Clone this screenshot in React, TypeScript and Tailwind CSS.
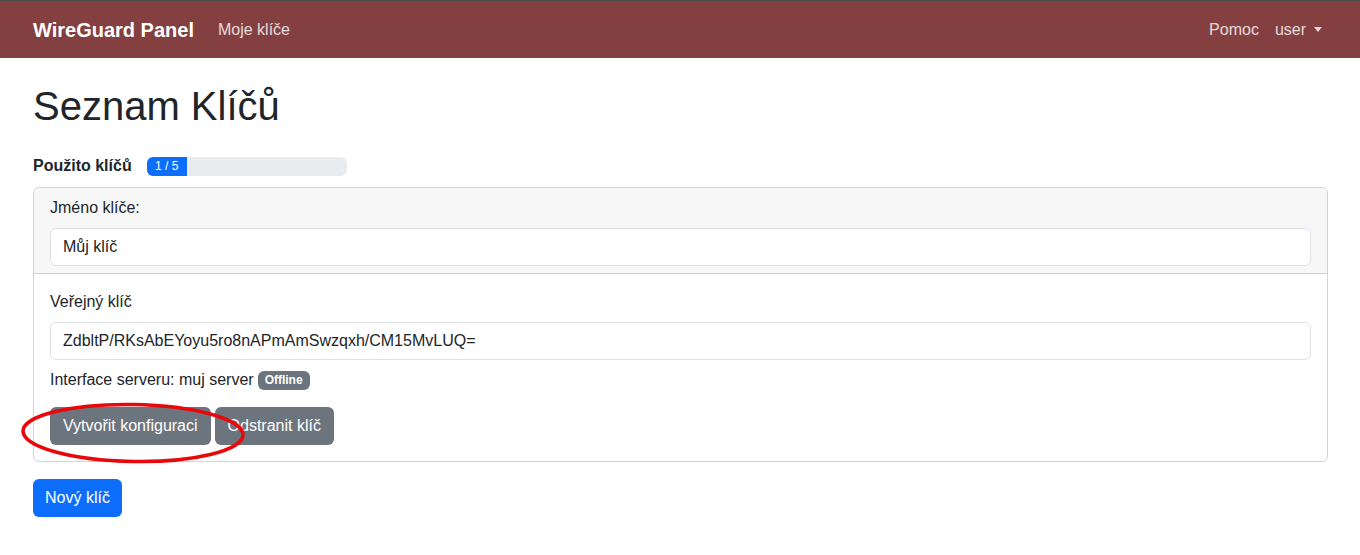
import React from 'react';

const font = { fontFamily: '"Liberation Sans", Arial, sans-serif' };

function Navbar() {
  return (
    <nav className="flex h-[58px] items-center justify-between border-t border-[#4a4a4a] bg-[#843f41] pl-[33px] pr-[38px]">
      <div className="flex items-center">
        <span className="text-[20px] font-bold text-white">WireGuard Panel</span>
        <span className="ml-[24px] text-[16px] text-white/80">Moje klíče</span>
      </div>
      <div className="flex items-center text-[16px] text-white/80">
        <span>Pomoc</span>
        <span className="ml-[16px] flex items-center">
          user
          <span className="ml-[8px] inline-block h-0 w-0 border-x-[4px] border-t-[5px] border-x-transparent border-t-white/80" />
        </span>
      </div>
    </nav>
  );
}

export default function App() {
  return (
    <div className="min-h-[555px] bg-white text-[16px] text-[#212529]" style={font}>
      <Navbar />
      <main className="pl-[33px] pr-[32px] pt-[24px]">
        <h1 className="mb-[24px] text-[40px] leading-[48px]">Seznam Klíčů</h1>

        <div className="mb-[9px] flex items-center">
          <span className="font-bold">Použito klíčů</span>
          <div className="ml-[15px] flex h-[19px] w-[200px] overflow-hidden rounded-[6px] bg-[#e9ecef]">
            <div className="flex w-[40px] items-center justify-center bg-[#0d6efd] text-[12px] text-white">
              1 / 5
            </div>
          </div>
        </div>

        <div className="rounded-[6px] border border-[#d4d4d4]">
          <div className="rounded-t-[6px] border-b border-[#cfcfcf] bg-[#f7f7f7] px-[16px] pt-[8px] pb-[7px]">
            <label className="mb-[8px] block leading-[24px]">Jméno klíče:</label>
            <div className="flex h-[38px] items-center rounded-[6px] border border-[#dee2e6] bg-white px-[12px]">
              Můj klíč
            </div>
          </div>
          <div className="p-[16px]">
            <label className="mb-[8px] block leading-[24px]">Veřejný klíč</label>
            <div className="flex h-[38px] items-center rounded-[6px] border border-[#dee2e6] bg-white px-[12px]">
              ZdbltP/RKsAbEYoyu5ro8nAPmAmSwzqxh/CM15MvLUQ=
            </div>
            <div className="mt-[8px] flex items-center leading-[24px]">
              Interface serveru: muj server
              <span className="ml-[4px] rounded-[6px] bg-[#6c757d] px-[7px] py-[3px] text-[12px] leading-[13px] font-bold text-white">
                Offline
              </span>
            </div>
            <div className="relative mt-[15px] flex gap-[4px]">
              <button className="h-[38px] rounded-[6px] bg-[#6c757d] px-[13px] text-white">Vytvořit konfiguraci</button>
              <button className="h-[38px] rounded-[6px] bg-[#6c757d] px-[13px] text-white">Odstranit klíč</button>
              <svg className="pointer-events-none absolute left-[-32px] top-[-7px]" width="230" height="66" viewBox="0 0 230 66">
                <ellipse cx="115" cy="33" rx="110" ry="28.5" fill="none" stroke="#e8070b" strokeWidth="3.5" transform="rotate(1 115 33)" />
              </svg>
            </div>
          </div>
        </div>

        <button className="mt-[17px] h-[38px] rounded-[6px] bg-[#0d6efd] px-[12px] text-white">Nový klíč</button>
      </main>
    </div>
  );
}
